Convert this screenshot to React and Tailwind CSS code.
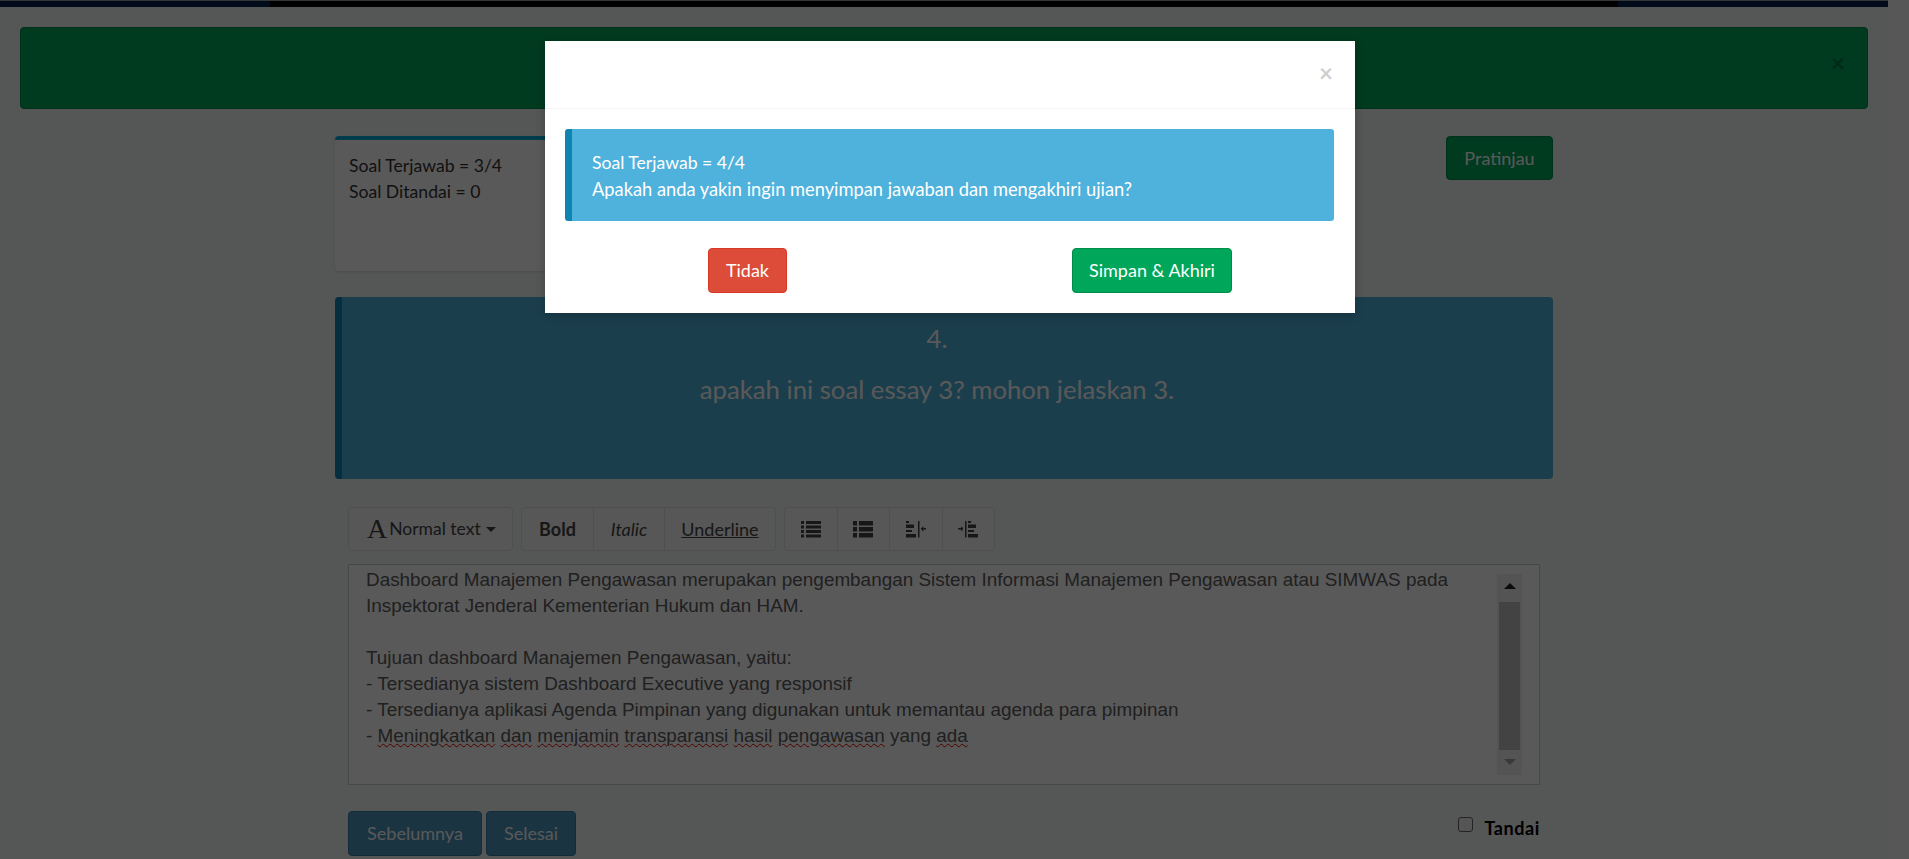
import React from "react";

const uiFont = "font-['Lato','Noto_Sans',sans-serif]";

const ListIcon = () => (
  <svg width="20" height="18" viewBox="0 0 20 18" fill="currentColor">
    <rect x="0" y="1" width="3" height="3" />
    <rect x="5" y="1" width="15" height="3" />
    <rect x="0" y="5.5" width="3" height="3" />
    <rect x="5" y="5.5" width="15" height="3" />
    <rect x="0" y="10" width="3" height="3" />
    <rect x="5" y="10" width="15" height="3" />
    <rect x="0" y="14.5" width="3" height="3" />
    <rect x="5" y="14.5" width="15" height="3" />
  </svg>
);

const ThListIcon = () => (
  <svg width="20" height="18" viewBox="0 0 20 18" fill="currentColor">
    <rect x="0" y="1" width="4" height="4.5" />
    <rect x="6" y="1" width="14" height="4.5" />
    <rect x="0" y="7" width="4" height="4.5" />
    <rect x="6" y="7" width="14" height="4.5" />
    <rect x="0" y="13" width="4" height="4.5" />
    <rect x="6" y="13" width="14" height="4.5" />
  </svg>
);

const OutdentIcon = () => (
  <svg width="20" height="18" viewBox="0 0 20 18" fill="currentColor">
    <rect x="0" y="1" width="3" height="2" />
    <rect x="0" y="4.5" width="8" height="3.5" />
    <rect x="0" y="10" width="6" height="2" />
    <rect x="0" y="14" width="10" height="3.5" />
    <rect x="12" y="1" width="1.5" height="16.5" />
    <rect x="15" y="8" width="5" height="1.5" />
    <rect x="16" y="6.8" width="1.5" height="4" />
  </svg>
);

const IndentIcon = () => (
  <svg width="20" height="18" viewBox="0 0 20 18" fill="currentColor">
    <rect x="0" y="8" width="5" height="1.5" />
    <rect x="3" y="6.8" width="1.5" height="4" />
    <rect x="7" y="1" width="1.5" height="16.5" />
    <rect x="10" y="1" width="3" height="2" />
    <rect x="10" y="4.5" width="8" height="3.5" />
    <rect x="10" y="10" width="6" height="2" />
    <rect x="10" y="14" width="10" height="3.5" />
  </svg>
);

const ToolbarGroup = ({ children, className }) => (
  <div className={`flex h-[44px] rounded-[4px] border border-[#e3e3e3] bg-[#f8f8f8] text-[#444] ${className}`}>
    {children}
  </div>
);

const squiggle = "underline decoration-wavy decoration-[#e00000] decoration-1 underline-offset-[1px]";

const App = () => {
  return (
    <div className={`relative h-[859px] overflow-hidden flex bg-[#f1f1f1] ${uiFont}`}>
      <div className="flex-1 min-w-0 flex flex-col bg-[#f4f5f7]">
        <div className="h-[7px] flex border-t border-[#999]">
          <div className="w-[270px] bg-[#03204a]" />
          <div className="flex-1 bg-black" />
          <div className="w-[270px] bg-[#03204a]" />
        </div>

        <div className="px-[20px] pt-[20px]">
          <div className="h-[82px] rounded-[4px] bg-[#00a65a] border border-[#008d4c] flex items-center justify-end pr-[22px] pb-[10px] text-black/30 text-[24px] font-bold">
            ×
          </div>
        </div>

        <div className="ml-[335px] w-[1218px] pt-[27px]">
          <div className="flex justify-between items-start">
            <div className="w-[600px] h-[135px] rounded-[4px] border-t-[4px] border-[#00acd6] bg-white shadow-sm px-[14px] pt-[13px] text-[17.6px] leading-[26px] text-[#333]">
              <p>Soal Terjawab = 3/4</p>
              <p>Soal Ditandai = 0</p>
            </div>
            <button className="w-[107px] h-[44px] rounded-[4px] bg-[#00a65a] border border-[#008d4c] text-[18px] text-white">
              Pratinjau
            </button>
          </div>

          <div className="mt-[26px] h-[182px] rounded-[4px] bg-[#4fb2dc] border-l-[7px] border-[#0f84b1] text-center text-white pt-[24px] pr-[21px]">
            <p className="text-[25.7px] leading-[34px]">4.</p>
            <p className="mt-[17px] text-[25.7px] leading-[34px]">apakah ini soal essay 3? mohon jelaskan 3.</p>
          </div>

          <div className="mx-[13px] mt-[28px]">
            <div className="flex gap-[8px]">
              <ToolbarGroup className="w-[165px] items-center pl-[18px]">
                <span className="font-['Liberation_Serif',serif] text-[28px] leading-none mr-[2px]">A</span>
                <span className="text-[17.5px]">Normal text</span>
                <span className="ml-[5px] border-x-[5px] border-x-transparent border-t-[5px] border-t-[#444]" />
              </ToolbarGroup>
              <ToolbarGroup className="w-[255px] items-stretch text-[18px]">
                <div className="w-[72px] flex items-center justify-center font-bold border-r border-[#e3e3e3]">Bold</div>
                <div className="w-[71px] flex items-center justify-center italic border-r border-[#e3e3e3]">Italic</div>
                <div className="flex-1 flex items-center justify-center underline">Underline</div>
              </ToolbarGroup>
              <ToolbarGroup className="w-[211px] items-stretch">
                <div className="flex-1 flex items-center justify-center border-r border-[#e3e3e3]"><ListIcon /></div>
                <div className="flex-1 flex items-center justify-center border-r border-[#e3e3e3]"><ThListIcon /></div>
                <div className="flex-1 flex items-center justify-center border-r border-[#e3e3e3]"><OutdentIcon /></div>
                <div className="flex-1 flex items-center justify-center"><IndentIcon /></div>
              </ToolbarGroup>
            </div>

            <div className="mt-[13px] h-[221px] border border-[#ccc] bg-white flex font-['Liberation_Sans',sans-serif] text-[18.9px] leading-[26px] text-[#5c5c5c]">
              <div className="flex-1 pl-[17px] pt-[2px]">
                <p>Dashboard Manajemen Pengawasan merupakan pengembangan Sistem Informasi Manajemen Pengawasan atau SIMWAS pada</p>
                <p>Inspektorat Jenderal Kementerian Hukum dan HAM.</p>
                <p className="h-[26px]" />
                <p>Tujuan dashboard Manajemen Pengawasan, yaitu:</p>
                <p>- Tersedianya sistem Dashboard Executive yang responsif</p>
                <p>- Tersedianya aplikasi Agenda Pimpinan yang digunakan untuk memantau agenda para pimpinan</p>
                <p>
                  - <span className={squiggle}>Meningkatkan</span> <span className={squiggle}>dan</span>{" "}
                  <span className={squiggle}>menjamin</span> <span className={squiggle}>transparansi</span>{" "}
                  <span className={squiggle}>hasil</span> <span className={squiggle}>pengawasan</span> yang{" "}
                  <span className={squiggle}>ada</span>
                </p>
              </div>
              <div className="w-[25px] mt-[9px] mb-[9px] mr-[17px] bg-[#f1f1f1] flex flex-col items-center">
                <span className="mt-[9px] border-x-[6px] border-x-transparent border-b-[6px] border-b-[#222]" />
                <div className="mt-[13px] w-[21px] h-[148px] bg-[#c1c1c1]" />
                <span className="mt-[9px] border-x-[6px] border-x-transparent border-t-[6px] border-t-[#a3a3a3]" />
              </div>
            </div>

            <div className="mt-[26px] flex justify-between">
              <div className="flex gap-[4px]">
                <button className="w-[134px] h-[45px] rounded-[4px] bg-[#4a94be] border border-[#367fa9] text-[18px] text-white">Sebelumnya</button>
                <button className="w-[90px] h-[45px] rounded-[4px] bg-[#4a94be] border border-[#367fa9] text-[18px] text-white">Selesai</button>
              </div>
              <label className="flex items-start pt-[6px] text-[18px] leading-[22px] font-bold tracking-[0.6px] text-black">
                <span className="w-[15px] h-[15px] rounded-[3px] border border-[#666] bg-[#f4f4f4] mr-[11px]" />
                <span>Tandai</span>
              </label>
            </div>
          </div>
        </div>
      </div>
      <div className="w-[21px] shrink-0 bg-[#f9f9f9]" />

      {/* modal */}
      <div className="absolute inset-0 bg-black/65 flex justify-center pl-[12px] pr-[21px]">
        <div className="mt-[41px] w-[810px] h-[272px] bg-white shadow-[0_3px_9px_rgba(0,0,0,0.2)]">
          <div className="h-[68px] border-b border-[#f4f4f4] flex justify-end items-center pr-[22px] pb-[4px] text-[#cfcfcf] text-[24px] font-bold">
            ×
          </div>
          <div className="ml-[20px] w-[769px] mt-[20px] h-[92px] rounded-[3px] bg-[#4fb2dc] border-l-[7px] border-[#0f84b1] flex flex-col justify-center pl-[20px] pt-[2px] leading-[26px] text-white">
            <p className="text-[17.6px]">Soal Terjawab = 4/4</p>
            <p className="text-[18.3px]">Apakah anda yakin ingin menyimpan jawaban dan mengakhiri ujian?</p>
          </div>
          <div className="mt-[27px] flex">
            <button className="ml-[163px] w-[79px] h-[45px] rounded-[4px] bg-[#dd4b39] border border-[#d73925] text-[18px] text-white">Tidak</button>
            <button className="ml-[285px] w-[160px] h-[45px] rounded-[4px] bg-[#00a65a] border border-[#008d4c] text-[18px] text-white">Simpan &amp; Akhiri</button>
          </div>
        </div>
      </div>
    </div>
  );
};

export default App;
